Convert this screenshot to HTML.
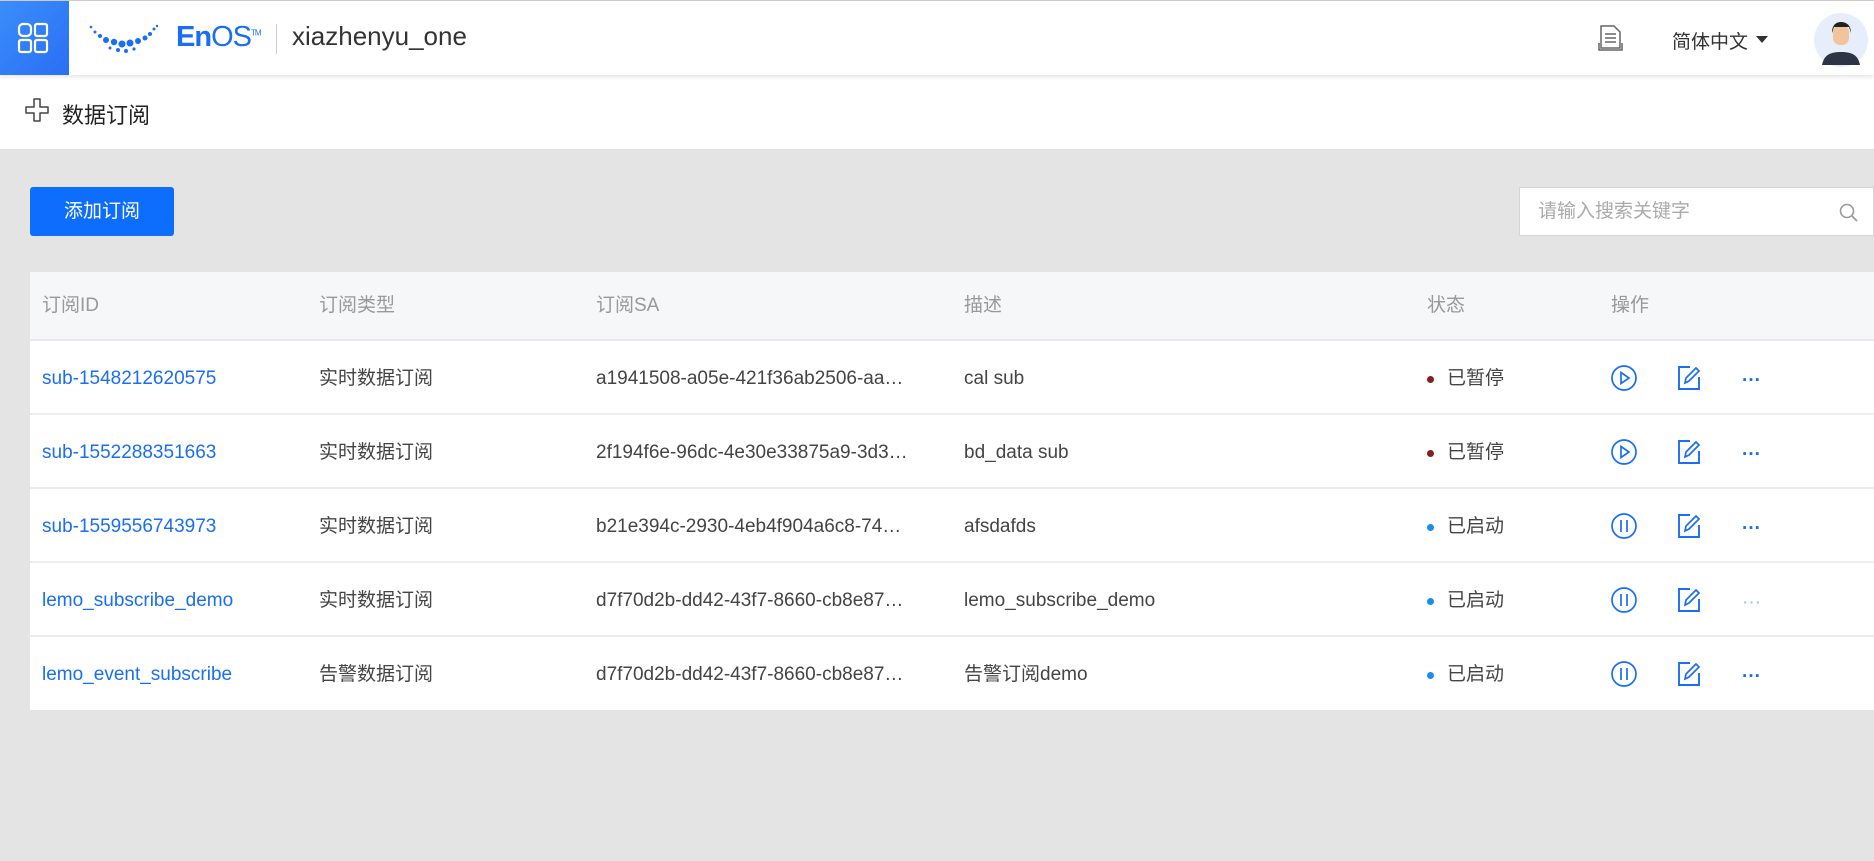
<!DOCTYPE html>
<html><head><meta charset="utf-8"><style>
*{box-sizing:border-box;margin:0;padding:0}
body{width:1874px;height:861px;overflow:hidden;background:#e4e4e4;font-family:"Liberation Sans","Noto Sans CJK SC",sans-serif;position:relative}
.hdr{position:absolute;left:0;top:0;width:1874px;height:75px;background:#fff;border-top:1px solid #ccc;box-shadow:0 2px 4px rgba(0,0,0,.1);z-index:2}
.apps{position:absolute;left:0;top:0;width:69px;height:74px;background:linear-gradient(135deg,#3a8ef8,#2a6ef6)}
.crumb{position:absolute;left:0;top:75px;width:1874px;height:74px;background:#fff}
.abs{position:absolute}
.btn{position:absolute;left:30px;top:187px;width:144px;height:49px;background:#0d6efd;border-radius:3px;color:#fff;font-size:19px;line-height:49px;text-align:center}
.search{position:absolute;left:1519px;top:187px;width:355px;height:49px;background:#fff;border:1px solid #d5d5d5;font-size:19px;color:#aaa;line-height:47px;padding-left:18px}
.tbl{position:absolute;left:30px;top:272px;width:1844px;height:438px;background:#fff}
.th{position:absolute;left:0;top:0;width:100%;height:69px;background:#f6f7f9;border-bottom:2px solid #e8e8ee;font-size:19px}
.row{position:absolute;left:0;width:100%;height:74px;border-bottom:2px solid #ececec;font-size:19px;color:#444}
.c{position:absolute;top:2px;line-height:72px;white-space:nowrap}
.th .c{top:0;line-height:68px;color:#999}
a{color:#1a6ef5;text-decoration:none}
.dot{position:absolute;left:1397px;top:35px;width:7px;height:7px;border-radius:50%}
.ic{position:absolute;top:23px}
</style></head><body>
<div class="hdr">
 <div class="apps"><svg width="69" height="74"><g fill="none" stroke="#fff" stroke-width="2.2"><rect x="19" y="23" width="12" height="12" rx="4"/><rect x="35" y="23" width="12" height="12" rx="2"/><rect x="19" y="39" width="12" height="12" rx="2"/><rect x="35" y="39" width="12" height="12" rx="2"/></g></svg></div>
 <svg class="abs" style="left:88px;top:22px" width="80" height="32"><g fill="#1a6ef5"><circle cx="3" cy="4" r="1.3"/><circle cx="7" cy="9" r="1.5"/><circle cx="12" cy="13" r="2"/><circle cx="18" cy="17" r="3"/><circle cx="26" cy="19" r="3.2"/><circle cx="34" cy="21" r="3.5"/><circle cx="42" cy="20" r="3.5"/><circle cx="50" cy="18" r="3"/><circle cx="57" cy="15" r="2.5"/><circle cx="62" cy="11" r="2"/><circle cx="66" cy="6" r="1.5"/><circle cx="69" cy="3" r="1.2"/><circle cx="22" cy="25" r="1.5"/><circle cx="30" cy="27" r="2"/><circle cx="38" cy="28" r="2"/><circle cx="46" cy="26" r="1.6"/></g></svg>
 <div class="abs" style="left:176px;top:20px;font-size:29px;color:#1a6ef5;font-weight:bold;letter-spacing:-1px">En<span style="font-weight:normal">OS</span><sup style="font-size:8px;font-weight:normal">TM</sup></div>
 <div class="abs" style="left:276px;top:23px;width:1px;height:30px;background:#ccc"></div>
 <div class="abs" style="left:292px;top:20px;font-size:26px;color:#333">xiazhenyu_one</div>
 <svg class="abs" style="left:1597px;top:22px" width="28" height="30"><g fill="none" stroke="#666" stroke-width="1.5"><path d="M4 3h13l6 6v16H4z"/><path d="M8 11h11M8 15h11M8 19h11"/><path d="M2 20v7h23v-7"/></g></svg>
 <div class="abs" style="left:1672px;top:26px;font-size:19px;color:#333">简体中文</div>
 <svg class="abs" style="left:1756px;top:35px" width="12" height="8"><path d="M0 0h12L6 7z" fill="#333"/></svg>
 <svg class="abs" style="left:1814px;top:12px" width="54" height="54"><circle cx="27" cy="27" r="27" fill="#e6eefb"/><path d="M8 52c2-10 8-13 19-13s17 3 19 13z" fill="#2c3446"/><rect x="19" y="12" width="16" height="20" rx="7" fill="#f2c49a"/><path d="M18 20c0-9 5-11 9-11s10 2 10 11l-2-6h-15z" fill="#222"/></svg>
</div>
<div class="crumb">
 <svg class="abs" style="left:24px;top:22px" width="28" height="28"><path d="M10 2h6v8h8v6h-8v8h-6v-8H2v-6h8z" fill="none" stroke="#444" stroke-width="1.5" stroke-linejoin="round"/></svg>
 <div class="abs" style="left:62px;top:23px;font-size:22px;color:#222">数据订阅</div>
</div>
<div class="btn">添加订阅</div>
<div class="search">请输入搜索关键字<svg class="abs" style="left:318px;top:14px" width="22" height="22"><circle cx="9" cy="9" r="6.5" fill="none" stroke="#999" stroke-width="1.6"/><path d="M14 14l5 5" stroke="#999" stroke-width="1.8"/></svg></div>
<div class="tbl">
 <div class="th"><div class="c" style="left:12px">订阅ID</div><div class="c" style="left:289px">订阅类型</div><div class="c" style="left:566px">订阅SA</div><div class="c" style="left:934px">描述</div><div class="c" style="left:1397px">状态</div><div class="c" style="left:1581px">操作</div></div>
 <div class="row" style="top:69px"><div class="c" style="left:12px"><a>sub-1548212620575</a></div><div class="c" style="left:289px">实时数据订阅</div><div class="c" style="left:566px">a1941508-a05e-421f36ab2506-aa…</div><div class="c" style="left:934px">cal sub</div><span class="dot" style="background:#8b1d1d"></span><div class="c" style="left:1417px">已暂停</div>
  <svg class="ic" style="left:1580px" width="28" height="28"><circle cx="14" cy="14" r="12" fill="none" stroke="#1a6ef5" stroke-width="1.7"/><path d="M11 8.5l8 5.5-8 5.5z" fill="none" stroke="#1a6ef5" stroke-width="1.7"/></svg>
  <svg class="ic" style="left:1646px" width="28" height="28"><path d="M14 3H3v22h20V13" fill="none" stroke="#1a6ef5" stroke-width="1.9"/><path d="M9 19l1-5 10-10 3 3-10 10z" fill="none" stroke="#1a6ef5" stroke-width="1.7"/></svg>
  <div class="c" style="left:1712px;top:4px;color:#1a6ef5;font-weight:bold">···</div></div>
 <div class="row" style="top:143px"><div class="c" style="left:12px"><a>sub-1552288351663</a></div><div class="c" style="left:289px">实时数据订阅</div><div class="c" style="left:566px">2f194f6e-96dc-4e30e33875a9-3d3…</div><div class="c" style="left:934px">bd_data sub</div><span class="dot" style="background:#8b1d1d"></span><div class="c" style="left:1417px">已暂停</div>
  <svg class="ic" style="left:1580px" width="28" height="28"><circle cx="14" cy="14" r="12" fill="none" stroke="#1a6ef5" stroke-width="1.7"/><path d="M11 8.5l8 5.5-8 5.5z" fill="none" stroke="#1a6ef5" stroke-width="1.7"/></svg>
  <svg class="ic" style="left:1646px" width="28" height="28"><path d="M14 3H3v22h20V13" fill="none" stroke="#1a6ef5" stroke-width="1.9"/><path d="M9 19l1-5 10-10 3 3-10 10z" fill="none" stroke="#1a6ef5" stroke-width="1.7"/></svg>
  <div class="c" style="left:1712px;top:4px;color:#1a6ef5;font-weight:bold">···</div></div>
 <div class="row" style="top:217px"><div class="c" style="left:12px"><a>sub-1559556743973</a></div><div class="c" style="left:289px">实时数据订阅</div><div class="c" style="left:566px">b21e394c-2930-4eb4f904a6c8-74…</div><div class="c" style="left:934px">afsdafds</div><span class="dot" style="background:#1a8cf0"></span><div class="c" style="left:1417px">已启动</div>
  <svg class="ic" style="left:1580px" width="28" height="28"><circle cx="14" cy="14" r="12" fill="none" stroke="#1a6ef5" stroke-width="1.7"/><path d="M11 8v12M17 8v12" stroke="#1a6ef5" stroke-width="1.7"/></svg>
  <svg class="ic" style="left:1646px" width="28" height="28"><path d="M14 3H3v22h20V13" fill="none" stroke="#1a6ef5" stroke-width="1.9"/><path d="M9 19l1-5 10-10 3 3-10 10z" fill="none" stroke="#1a6ef5" stroke-width="1.7"/></svg>
  <div class="c" style="left:1712px;top:4px;color:#1a6ef5;font-weight:bold">···</div></div>
 <div class="row" style="top:291px"><div class="c" style="left:12px"><a>lemo_subscribe_demo</a></div><div class="c" style="left:289px">实时数据订阅</div><div class="c" style="left:566px">d7f70d2b-dd42-43f7-8660-cb8e87…</div><div class="c" style="left:934px">lemo_subscribe_demo</div><span class="dot" style="background:#1a8cf0"></span><div class="c" style="left:1417px">已启动</div>
  <svg class="ic" style="left:1580px" width="28" height="28"><circle cx="14" cy="14" r="12" fill="none" stroke="#1a6ef5" stroke-width="1.7"/><path d="M11 8v12M17 8v12" stroke="#1a6ef5" stroke-width="1.7"/></svg>
  <svg class="ic" style="left:1646px" width="28" height="28"><path d="M14 3H3v22h20V13" fill="none" stroke="#1a6ef5" stroke-width="1.9"/><path d="M9 19l1-5 10-10 3 3-10 10z" fill="none" stroke="#1a6ef5" stroke-width="1.7"/></svg>
  <div class="c" style="left:1712px;top:4px;color:#9bbcf5">···</div></div>
 <div class="row" style="top:365px;border-bottom:none"><div class="c" style="left:12px"><a>lemo_event_subscribe</a></div><div class="c" style="left:289px">告警数据订阅</div><div class="c" style="left:566px">d7f70d2b-dd42-43f7-8660-cb8e87…</div><div class="c" style="left:934px">告警订阅demo</div><span class="dot" style="background:#1a8cf0"></span><div class="c" style="left:1417px">已启动</div>
  <svg class="ic" style="left:1580px" width="28" height="28"><circle cx="14" cy="14" r="12" fill="none" stroke="#1a6ef5" stroke-width="1.7"/><path d="M11 8v12M17 8v12" stroke="#1a6ef5" stroke-width="1.7"/></svg>
  <svg class="ic" style="left:1646px" width="28" height="28"><path d="M14 3H3v22h20V13" fill="none" stroke="#1a6ef5" stroke-width="1.9"/><path d="M9 19l1-5 10-10 3 3-10 10z" fill="none" stroke="#1a6ef5" stroke-width="1.7"/></svg>
  <div class="c" style="left:1712px;top:4px;color:#1a6ef5;font-weight:bold">···</div></div>
</div>
</body></html>
